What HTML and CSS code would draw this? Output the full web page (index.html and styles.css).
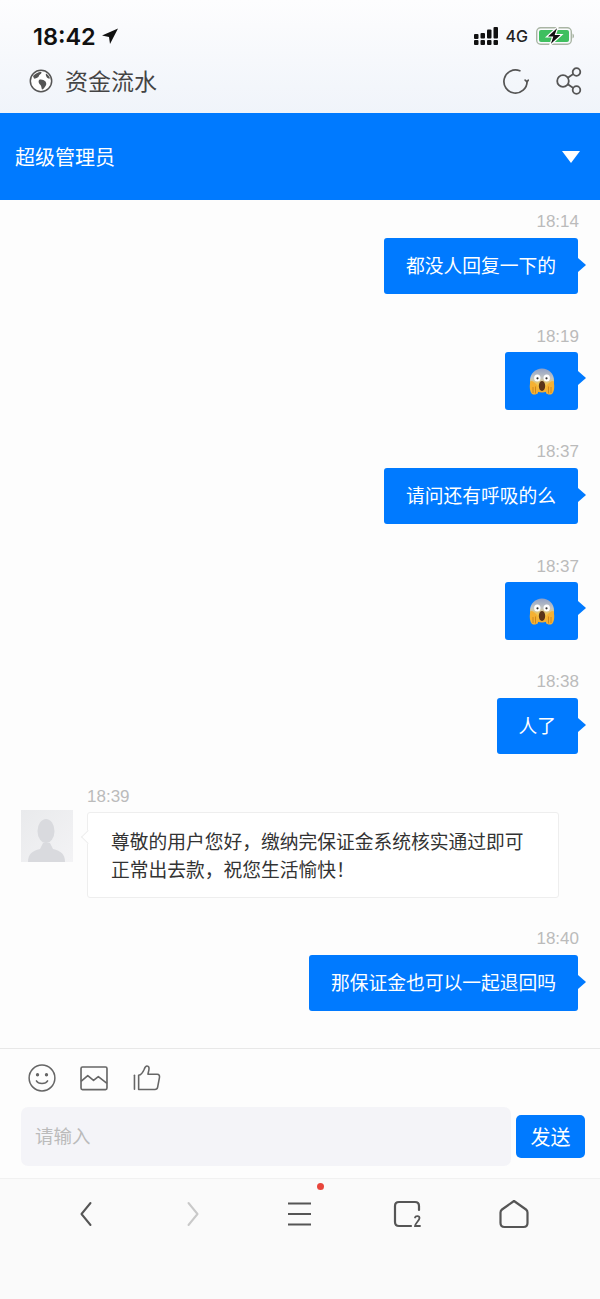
FILE: index.html
```html
<!DOCTYPE html>
<html lang="zh-CN">
<head>
    <meta charset="UTF-8">
    <meta name="viewport" content="width=device-width, initial-scale=1.0">
    <title>资金流水</title>
    <link rel="stylesheet" href="styles.css">
</head>
<body>

    <svg class="defs" width="0" height="0">
        <defs>
            <linearGradient id="scream-face" x1="0" y1="0" x2="0" y2="1">
                <stop offset="0" stop-color="#8f9fc4"/>
                <stop offset="0.4" stop-color="#c3c6c4"/>
                <stop offset="0.7" stop-color="#f7c744"/>
                <stop offset="1" stop-color="#f2a92c"/>
            </linearGradient>
            <symbol id="scream" viewBox="0 0 26 27">
                <circle cx="13" cy="12.5" r="12" fill="url(#scream-face)"/>
                <ellipse cx="8.300" cy="10" rx="3.200" ry="3.500" fill="#fff"/>
                <ellipse cx="17.700" cy="10" rx="3.200" ry="3.500" fill="#fff"/>
                <circle cx="8.500" cy="10.300" r="1.100" fill="#333"/>
                <circle cx="17.500" cy="10.300" r="1.100" fill="#333"/>
                <ellipse cx="13" cy="18" rx="3.200" ry="5" fill="#5a3418"/>
                <path d="M1.500 13 C0 19 1 24 3 26 C5 27 8 26.500 9 25 L8.500 18 C7 15 4 13 1.500 13Z" fill="#f5b133"/>
                <path d="M24.500 13 C26 19 25 24 23 26 C21 27 18 26.500 17 25 L17.500 18 C19 15 22 13 24.500 13Z" fill="#f5b133"/>
                <path d="M4 19v6M6.500 18.500v7M19.500 18.500v7M22 19v6" stroke="#c67f17" stroke-width="0.8" fill="none"/>
            </symbol>
        </defs>
    </svg>

    <header class="top">
        <div class="status">
            <div class="status-left">
                <span class="clock">18:42</span>
                <svg class="loc" width="16" height="16" viewBox="0 0 16 16"><path d="M16 0.500 L0 7.500 L7 9 L8 16Z" fill="#111"/></svg>
            </div>
            <div class="status-right">
                <svg width="25" height="18" viewBox="0 0 25 18" fill="#111">
                    <rect x="0" y="7" width="4.500" height="5" rx="1"/><rect x="0" y="13" width="4.500" height="5" rx="1"/>
                    <rect x="6.500" y="6" width="4.500" height="5.500" rx="1"/><rect x="6.500" y="13" width="4.500" height="5" rx="1"/>
                    <rect x="13" y="2.500" width="4.500" height="9" rx="1"/><rect x="13" y="13" width="4.500" height="5" rx="1"/>
                    <rect x="19.500" y="0" width="4.500" height="11.500" rx="1"/><rect x="19.500" y="13" width="4.500" height="5" rx="1"/>
                </svg>
                <span class="net">4G</span>
                <svg width="38" height="20" viewBox="0 0 38 20">
                    <rect x="0.700" y="1.700" width="34.600" height="16.600" rx="4" fill="none" stroke="#a9b5a4" stroke-width="1.400"/>
                    <rect x="3" y="4" width="30" height="12" rx="2" fill="#3fbf5f"/>
                    <path d="M36.500 7.500c1 .5 1.500 1.500 1.500 2.500s-.5 2-1.500 2.500z" fill="#a9b5a4"/>
                    <path d="M22.500 0 L10.500 11 H16.500 L13.500 20 L26 8.500 H19.500Z" fill="#111" stroke="#fff" stroke-width="1.200"/>
                </svg>
            </div>
        </div>
        <div class="titlebar">
            <div class="title-left">
                <svg width="24" height="24" viewBox="0 0 24 24">
                    <circle cx="12" cy="12" r="10.700" fill="#fff" stroke="#555" stroke-width="1.500"/>
                    <path d="M4 7c2-2 5-4 8-4.200 1 .7.500 2-1 2.700-1.500 1-1 2.500-2.500 3C7 9.200 6 10 5 9.500z" fill="#555"/>
                    <path d="M10 11c2-1 5 0 6.500 1.500 1 1.500 1 3 0 4.500-1 1.800-2.500 3.500-3.500 3.500-.7-1.500-.5-3.500-1.500-4.500-1.500-1-2.500-3.500-1.500-5z" fill="#555"/>
                    <path d="M17 4.500c2 1 3.500 3 4 5-1.500.3-3-.5-3.500-1.700-.5-1-1-2-.5-3.300z" fill="#555"/>
                </svg>
                <h1>资金流水</h1>
            </div>
            <div class="title-right">
                <svg width="27" height="27" viewBox="0 0 28 28" fill="none" stroke="#555" stroke-width="1.800" stroke-linecap="round" stroke-linejoin="round">
                    <path d="M26 14A12 12 0 1 1 18.500 2.900"/>
                    <path d="M24 12.500 L26 14.300 L27.200 12.700"/>
                </svg>
                <svg width="26" height="28" viewBox="0 0 26 28" fill="none" stroke="#555" stroke-width="1.800">
                    <circle cx="7" cy="14" r="5.800"/>
                    <circle cx="20.500" cy="5" r="3.800"/>
                    <circle cx="20.500" cy="23" r="3.800"/>
                    <path d="M11.800 10.800 L17.300 7.100M11.800 17.200 L17.300 20.900"/>
                </svg>
            </div>
        </div>
    </header>

    <div class="subject">
        <span>超级管理员</span>
        <span class="caret"></span>
    </div>

    <main class="messages">
        <div class="msg mine">
            <div class="time">18:14</div>
            <div class="bubble">都没人回复一下的</div>
        </div>
        <div class="msg mine">
            <div class="time">18:19</div>
            <div class="bubble emoji"><svg width="26" height="27"><use href="#scream"/></svg></div>
        </div>
        <div class="msg mine">
            <div class="time">18:37</div>
            <div class="bubble">请问还有呼吸的么</div>
        </div>
        <div class="msg mine">
            <div class="time">18:37</div>
            <div class="bubble emoji"><svg width="26" height="27"><use href="#scream"/></svg></div>
        </div>
        <div class="msg mine">
            <div class="time">18:38</div>
            <div class="bubble">人了</div>
        </div>
        <div class="msg theirs">
            <div class="avatar">
                <svg width="52" height="52" viewBox="0 0 52 52">
                    <ellipse cx="25" cy="21" rx="8.500" ry="12" fill="#d9dade"/>
                    <path d="M7 52c0-8 4-11 12-13l3-6h7l3 6c8 2 12 5 12 13z" fill="#d9dade"/>
                </svg>
            </div>
            <div class="body">
                <div class="time">18:39</div>
                <div class="bubble">尊敬的用户您好&#xFF0C;缴纳完保证金系统核实通过即可正常出去款&#xFF0C;祝您生活愉快&#xFF01;</div>
            </div>
        </div>
        <div class="msg mine">
            <div class="time">18:40</div>
            <div class="bubble">那保证金也可以一起退回吗</div>
        </div>
    </main>

    <section class="composer">
        <div class="tools">
            <svg width="28" height="28" viewBox="0 0 30 30" fill="none" stroke="#666" stroke-width="1.600" stroke-linecap="round">
                <circle cx="15" cy="15" r="13.800"/>
                <circle cx="10.200" cy="11.500" r="1" fill="#666"/>
                <circle cx="19.800" cy="11.500" r="1" fill="#666"/>
                <path d="M9 18c2 3.800 10 3.800 12 0"/>
            </svg>
            <svg width="28" height="25" viewBox="0 0 29 26" fill="none" stroke="#666" stroke-width="1.700" stroke-linejoin="round">
                <rect x="1" y="1" width="27" height="23.500" rx="1.500"/>
                <path d="M1 16l7-6 6 5 5-4 9 7"/>
            </svg>
            <svg class="thumb" width="28" height="26" viewBox="0 0 30 28" fill="none" stroke="#666" stroke-width="1.700" stroke-linejoin="round" stroke-linecap="round">
                <path d="M1.500 11v15"/>
                <path d="M6 11c3-.5 5-4 6-6.500.7-2 1.500-3.500 3-3.500 2 0 2.500 2 2 4.500L16 10h10c2 0 2.800 1.500 2.400 3.500l-2 10.500c-.3 1.500-1.200 2.300-2.800 2.300H6z"/>
            </svg>
        </div>
        <div class="input-row">
            <div class="input">请输入</div>
            <button class="send">发送</button>
        </div>
    </section>

    <nav class="navbar">
        <div class="nav-item">
            <svg width="14" height="26" viewBox="0 0 14 26" fill="none" stroke="#555" stroke-width="2" stroke-linecap="round" stroke-linejoin="round"><path d="M11.500 2 L2.500 13 L11.500 24"/></svg>
        </div>
        <div class="nav-item">
            <svg width="14" height="26" viewBox="0 0 14 26" fill="none" stroke="#c9c9c9" stroke-width="2" stroke-linecap="round" stroke-linejoin="round"><path d="M2.500 2 L11.500 13 L2.500 24"/></svg>
        </div>
        <div class="nav-item menu">
            <svg width="26" height="26" viewBox="0 0 26 26" stroke="#555" stroke-width="2"><path d="M1 2.500h23M1 13h23M1 23.500h23"/></svg>
            <span class="dot"></span>
        </div>
        <div class="nav-item">
            <svg width="28" height="28" viewBox="0 0 28 28" fill="none" stroke="#555" stroke-width="2.200" stroke-linecap="round">
                <path d="M18 26H6c-2.500 0-4-1.500-4-4V6c0-2.500 1.500-4 4-4h16c2.500 0 4 1.500 4 4v4"/>
                <path d="M22 17.500c.5-2 4.500-2 4.500.5 0 2.500-4.500 5.500-4.500 8h5" stroke-width="1.800"/>
            </svg>
        </div>
        <div class="nav-item">
            <svg width="30" height="30" viewBox="0 0 30 30" fill="none" stroke="#555" stroke-width="2.200" stroke-linejoin="round">
                <path d="M15 2 L27 10.500c1 .7 1.500 1.500 1.500 3V24c0 2.500-1.500 4-4 4H5.500c-2.500 0-4-1.500-4-4V13.500c0-1.500.5-2.300 1.500-3z"/>
            </svg>
        </div>
    </nav>

</body>
</html>
```

FILE: styles.css
```css
* {
    margin: 0;
    padding: 0;
    box-sizing: border-box;
}

body {
    width: 600px;
    height: 1299px;
    overflow: hidden;
    font-family: "Noto Sans CJK SC", "Liberation Sans", sans-serif;
    background-color: #fdfdfd;
    color: #333;
}

.defs {
    position: absolute;
}

/* Header */
.top {
    height: 113px;
    background: linear-gradient(#fdfdfe, #f0f4fa);
    padding: 24px 18px 0 29px;
}

.status {
    display: flex;
    justify-content: space-between;
    align-items: center;
    height: 24px;
    padding-left: 4px;
    padding-right: 8px;
}

.status-left,
.status-right {
    display: flex;
    align-items: center;
}

.clock {
    font-family: "Inter", sans-serif;
    font-size: 23.500px;
    font-weight: 600;
    color: #111;
    margin-right: 6px;
}

.net {
    font-family: "Inter", sans-serif;
    font-size: 16px;
    font-weight: 500;
    color: #222;
    margin: 0 8px 0 7px;
}

.titlebar {
    display: flex;
    justify-content: space-between;
    align-items: center;
    height: 36px;
    margin-top: 15px;
}

.title-left,
.title-right {
    display: flex;
    align-items: center;
}

.title-left svg {
    margin-right: 12px;
}

.title-right {
    gap: 27px;
}

.top h1 {
    font-size: 23px;
    font-weight: 400;
    padding-bottom: 2px;
    color: #444;
}

/* Blue bar */
.subject {
    height: 87px;
    display: flex;
    justify-content: space-between;
    align-items: center;
    padding: 0 20px 0 15px;
    background-color: #007aff;
    color: #fff;
    font-size: 20px;
}

.caret {
    width: 0;
    height: 0;
    border-left: 9px solid transparent;
    border-right: 9px solid transparent;
    border-top: 12px solid #fff;
}

/* Messages */
.messages {
    height: 848px;
    padding: 12px 21px 0;
    overflow: hidden;
}

.msg {
    margin-bottom: 33px;
}

.time {
    font-family: "Liberation Sans", sans-serif;
    font-size: 17px;
    line-height: 20px;
    color: #bbb;
}

.mine {
    display: flex;
    flex-direction: column;
    align-items: flex-end;
}

.bubble {
    position: relative;
    font-size: 18.750px;
    line-height: 28px;
    border-radius: 3px;
}

.mine .bubble {
    margin-top: 6px;
    margin-right: 1px;
    padding: 13px 22px 15px;
    background-color: #007aff;
    color: #fff;
}

.mine .bubble::after {
    content: "";
    position: absolute;
    right: -8px;
    top: 50%;
    margin-top: -8px;
    border-left: 8px solid #007aff;
    border-top: 7px solid transparent;
    border-bottom: 7px solid transparent;
}

.mine .emoji {
    display: flex;
    align-items: center;
    justify-content: center;
    width: 73px;
    height: 58px;
    margin-top: 5px;
    margin-bottom: -1px;
    padding: 0;
}

.mine .emoji::after {
    margin-top: -10px;
}

.theirs {
    display: flex;
    align-items: flex-start;
    margin-bottom: 31px;
}

.avatar {
    width: 52px;
    height: 52px;
    margin-top: 23px;
    margin-right: 14px;
    background: linear-gradient(135deg, #e9eaec, #f3f3f5);
    overflow: hidden;
}

.avatar svg {
    display: block;
}

.body {
    width: 472px;
}

.theirs .bubble {
    margin-top: 5px;
    height: 86px;
    padding: 14px 23px;
    background-color: #fff;
    border: 1px solid #eee;
    color: #333;
}

.theirs .bubble::before {
    content: "";
    position: absolute;
    left: -5px;
    top: 19px;
    width: 9px;
    height: 9px;
    background-color: #fff;
    border-left: 1px solid #eee;
    border-bottom: 1px solid #eee;
    transform: rotate(45deg);
}

/* Composer */
.composer {
    height: 130px;
    border-top: 1px solid #e8e8e8;
    padding: 14px 15px 0 21px;
}

.tools {
    display: flex;
    align-items: center;
    gap: 24px;
    height: 30px;
    padding-left: 7px;
}

.thumb {
    margin-left: 1px;
}

.input-row {
    display: flex;
    align-items: center;
    gap: 5px;
    margin-top: 14px;
}

.input {
    flex: 1;
    height: 59px;
    padding-left: 14px;
    line-height: 57px;
    font-size: 18.500px;
    color: #bbb;
    background-color: #f4f4f8;
    border-radius: 7px;
}

.send {
    width: 69px;
    height: 43px;
    border: none;
    border-radius: 5px;
    font-family: inherit;
    font-size: 20px;
    color: #fff;
    background-color: #007aff;
}

/* Bottom bar */
.navbar {
    height: 121px;
    display: grid;
    grid-template-columns: repeat(5, 1fr);
    padding: 20px 32px 0;
    background-color: #fafafa;
    border-top: 1px solid #f1f1f1;
    align-items: start;
}

.nav-item {
    position: relative;
    display: flex;
    justify-content: center;
    align-items: center;
    height: 30px;
}

.dot {
    position: absolute;
    top: -16px;
    left: 71px;
    width: 7px;
    height: 7px;
    border-radius: 50%;
    background-color: #e8463c;
}
```
